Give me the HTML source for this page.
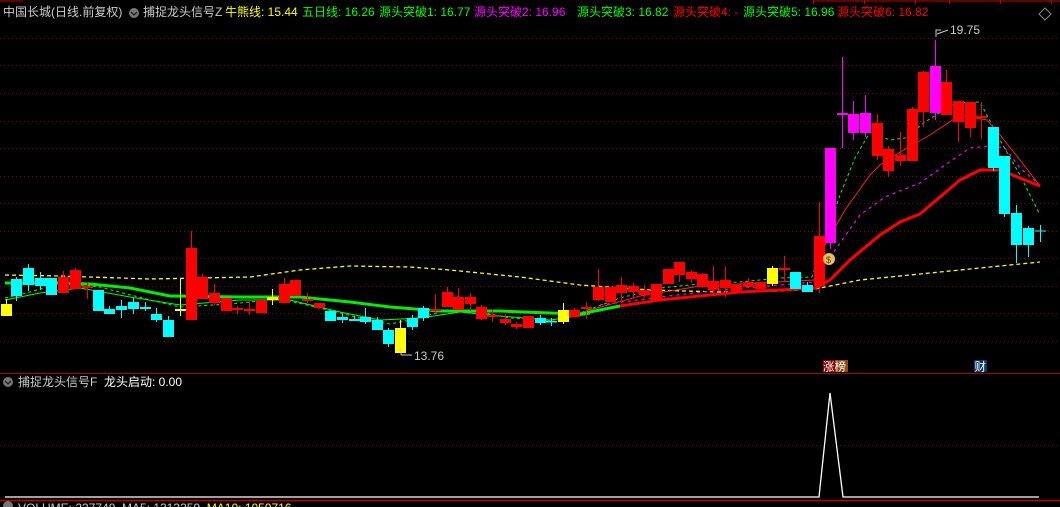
<!DOCTYPE html>
<html><head><meta charset="utf-8"><style>
html,body{margin:0;padding:0;background:#000;width:1060px;height:507px;overflow:hidden;position:relative;font-family:"Liberation Sans","Noto Sans CJK SC",sans-serif;font-size:12px}
.t{position:absolute;top:5px;white-space:nowrap;line-height:14px}
</style></head><body>
<svg width="1060" height="507" style="position:absolute;left:0;top:0">
<g stroke="#8a0000" stroke-width="1" stroke-dasharray="1 3">
<line x1="0" x2="1060" y1="38.5" y2="38.5"/><line x1="0" x2="1060" y1="65.5" y2="65.5"/><line x1="0" x2="1060" y1="93.5" y2="93.5"/><line x1="0" x2="1060" y1="121.5" y2="121.5"/><line x1="0" x2="1060" y1="148.5" y2="148.5"/><line x1="0" x2="1060" y1="176.5" y2="176.5"/><line x1="0" x2="1060" y1="203.5" y2="203.5"/><line x1="0" x2="1060" y1="231.5" y2="231.5"/><line x1="0" x2="1060" y1="258.5" y2="258.5"/><line x1="0" x2="1060" y1="286.5" y2="286.5"/><line x1="0" x2="1060" y1="313.5" y2="313.5"/><line x1="0" x2="1060" y1="341.5" y2="341.5"/><line x1="0" x2="1060" y1="445.5" y2="445.5"/>
</g>
<line x1="0" x2="1060" y1="373.5" y2="373.5" stroke="#b00000"/>
<line x1="0" x2="1060" y1="500.5" y2="500.5" stroke="#c00000" stroke-width="1.5"/>
<line x1="0" x2="23" y1="1" y2="1" stroke="#c00000"/>
<line x1="813" x2="1060" y1="1" y2="1" stroke="#c00000"/>
<g stroke="#c00000"><line x1="813.5" x2="813.5" y1="0" y2="4"/><line x1="864.5" x2="864.5" y1="0" y2="4"/><line x1="915.5" x2="915.5" y1="0" y2="4"/><line x1="949.5" x2="949.5" y1="0" y2="4"/><line x1="1000.5" x2="1000.5" y1="0" y2="4"/><line x1="1051.5" x2="1051.5" y1="0" y2="4"/></g>
<path d="M1045 8 L1051 14 L1045 20 L1039 14 Z" fill="none" stroke="#888"/>
<polyline fill="none" stroke="#ffff00" stroke-width="1.3" stroke-dasharray="4 3" points="5,275 60,276 150,279 250,277 300,270 350,266 410,267 450,270 520,277 580,285 650,290 720,292 780,291 815,289 860,280 950,271 1040,262"/>
<polyline fill="none" stroke="#00ff00" stroke-width="1" stroke-dasharray="3 3" points="5,298 30,292 60,283 100,287 150,300 180,307 230,304 280,299 320,308 360,318 390,324 410,320 440,312 470,310 510,318 550,321 580,313 620,298 660,288 700,284 740,282 780,278 812,277 830,225 840,195 855,158 870,132 890,140 905,138 925,122 955,103 980,102 1000,140 1020,175 1040,215"/>
<polyline fill="none" stroke="#00ff00" stroke-width="1" points="5,300 40,293 80,288 130,297 180,305 240,300 290,300 340,312 380,320 420,318 460,312 500,316 550,320 590,314"/>
<polyline fill="none" stroke="#ff00ff" stroke-width="1.2" stroke-dasharray="3 4" points="600,305 660,297 720,290 780,285 815,282 835,250 860,215 885,197 920,183 945,165 970,148 990,146 1005,148 1020,168 1040,185"/>
<polyline fill="none" stroke="#ff2020" stroke-width="1" points="590,310 640,296 700,286 760,283 814,280 825,245 845,210 870,175 880,165 900,152 930,135 960,115 987,120 1000,135 1020,160 1040,186"/>
<polyline fill="none" stroke="#00ee00" stroke-width="3" points="5,283 60,283 90,284 130,288 170,296 240,297 300,297 350,302 390,307 440,311 500,311 550,313 580,314 620,306"/>
<polyline fill="none" stroke="#ff0000" stroke-width="3" points="620,306 660,300 700,296 740,292 780,290 815,288 830,280 850,260 880,235 900,222 920,214 940,197 960,180 980,170 1000,170 1020,178 1040,186"/>
<g id="c"></g>
<path d="M1035 231 H1046 M1040.5 225 V242" stroke="#00ffff"/>
<path d="M936 37 V30 H941 M937 34 L948 30" stroke="#ccc" fill="none"/>
<text x="950" y="34" fill="#ccc" font-size="12" font-family="Liberation Sans">19.75</text>
<path d="M401 348 V355 M401 355 L412 355" stroke="#ccc" fill="none"/>
<text x="414" y="360" fill="#ccc" font-size="12" font-family="Liberation Sans">13.76</text>
<circle cx="829" cy="259" r="6" fill="#e8c060"/><text x="826" y="263" fill="#6a3a00" font-size="9">$</text>
<rect x="823" y="360" width="12" height="12" fill="#8b0000"/><rect x="835" y="360" width="13" height="12" fill="#8b4a10"/>
<text x="823" y="370.5" fill="#fff" font-size="11.5" font-family="Noto Sans CJK SC,sans-serif">涨榜</text>
<rect x="974" y="360" width="13" height="12" fill="#0a3a6a"/>
<text x="974.5" y="370.5" fill="#fff" font-size="11.5" font-family="Noto Sans CJK SC,sans-serif">财</text>
<polyline fill="none" stroke="#fff" stroke-width="1.3" points="5,497 819,497 830,393 843,497 1039,497"/>
<circle cx="8" cy="382" r="5" fill="#777"/><path d="M5 381 L8 384 L11 381" stroke="#222" fill="none" stroke-width="1.3"/>
<circle cx="8" cy="506" r="5" fill="#777"/>
<circle cx="134" cy="13" r="5" fill="#777"/><path d="M131 12 L134 15 L137 12" stroke="#222" fill="none" stroke-width="1.3"/>
</svg>
<div class="t" style="left:3px;color:#ccc">中国长城(日线.前复权)</div>
<div class="t" style="left:143px;color:#ccc">捕捉龙头信号Z</div>
<div class="t" style="left:225px;color:#ffff00">牛熊线: 15.44</div>
<div class="t" style="left:302px;color:#00ff00">五日线: 16.26</div>
<div class="t" style="left:379px;color:#00ff00">源头突破1: 16.77</div>
<div class="t" style="left:474px;color:#ff00ff">源头突破2: 16.96</div>
<div class="t" style="left:577px;color:#00ff00">源头突破3: 16.82</div>
<div class="t" style="left:673px;color:#ff0000">源头突破4: -</div>
<div class="t" style="left:743px;color:#00ff00">源头突破5: 16.96</div>
<div class="t" style="left:837px;color:#ff0000">源头突破6: 16.82</div>
<div class="t" style="left:18px;top:375px;color:#ccc">捕捉龙头信号F&nbsp; <span style="color:#fff">龙头启动: 0.00</span></div>
<div class="t" style="left:18px;top:501px;color:#ccc">VOLUME: 237749&nbsp; MA5: 1313359&nbsp; <span style="color:#ffff00">MA10: 1059716</span></div>
<script>
var d=[["y",1,304,316,299,316],["c",11,279,296,277,301],["c",23,268,285,264,291],["c",35,278,286,272,290],["c",46,278,295,278,295],["r",58,277,293,271,293],["r",70,270,289,268,289],["r",82,286,288,282,299],["c",93,290,311,290,311],["c",104,309,314,306,314],["c",116,306,310,300,318],["c",128,302,309,298,314],["c",140,307,309,302,311],["c",151,314,320,308,322],["c",163,320,337,316,337],["y",175,309,311,278,316],["r",186,248,320,231,320],["r",197,277,299,274,299],["r",209,293,303,284,305],["r",221,298,311,298,311],["r",232,308,310,306,314],["r",244,309,311,300,315],["r",256,300,313,300,313],["y",267,297,300,289,305],["r",279,284,303,278,303],["r",290,280,296,280,296],["r",302,299,301,293,303],["r",314,303,308,303,308],["c",325,311,321,311,321],["c",337,317,320,314,323],["c",349,319,321,316,321],["c",360,317,322,308,324],["c",372,320,330,317,330],["c",383,330,344,328,347],["y",395,328,353,320,353],["c",407,318,327,315,330],["c",418,308,318,306,321],["r",430,309,311,294,312],["r",442,292,307,287,307],["r",453,297,310,288,310],["r",465,297,304,293,311],["r",476,307,319,305,320],["r",487,315,317,309,322],["r",500,319,323,314,325],["r",511,324,327,322,329],["r",523,316,328,316,328],["c",535,318,323,315,325],["c",546,321,322,318,326],["y",558,310,322,303,324],["r",569,310,317,308,317],["r",581,307,309,302,319],["r",593,287,300,269,301],["r",605,287,302,287,302],["r",616,285,293,277,302],["r",628,286,292,283,299],["r",639,290,295,285,298],["r",651,284,301,284,301],["r",663,269,284,269,284],["r",674,262,275,262,282],["r",686,272,279,270,283],["r",697,274,287,273,288],["r",708,281,290,266,295],["r",720,280,288,267,297],["r",731,284,293,284,293],["r",743,282,287,278,287],["r",755,282,289,282,289],["y",767,268,284,266,286],["r",779,268,270,256,282],["c",790,272,289,272,289],["c",802,285,292,282,292],["r",814,236,286,202,293],["m",825,148,243,148,249],["m",837,113,115,57,148],["m",848,114,133,101,140],["m",860,113,133,95,137],["r",872,123,156,114,160],["r",883,149,171,146,177],["r",895,155,161,132,166],["r",907,109,161,107,161],["r",918,72,112,71,127],["m",930,66,113,40,120],["r",941,82,115,70,115],["r",953,101,122,101,142],["r",965,102,128,102,137],["r",976,116,118,102,139],["c",988,127,168,127,171],["c",999,156,214,156,217],["c",1011,213,245,205,263],["c",1023,228,245,226,257]];
var col={r:"#ff0000",c:"#00ffff",y:"#ffff00",m:"#ff00ff"};var s="";
d.forEach(function(a){var c=col[a[0]],x=a[1];s+='<line x1="'+(x+5.5)+'" x2="'+(x+5.5)+'" y1="'+a[4]+'" y2="'+a[5]+'" stroke="'+c+'"/>';s+='<rect x="'+x+'" y="'+a[2]+'" width="11" height="'+Math.max(a[3]-a[2],1.5)+'" fill="'+c+'"/>';});
document.getElementById("c").innerHTML=s;
</script>
</body></html>
